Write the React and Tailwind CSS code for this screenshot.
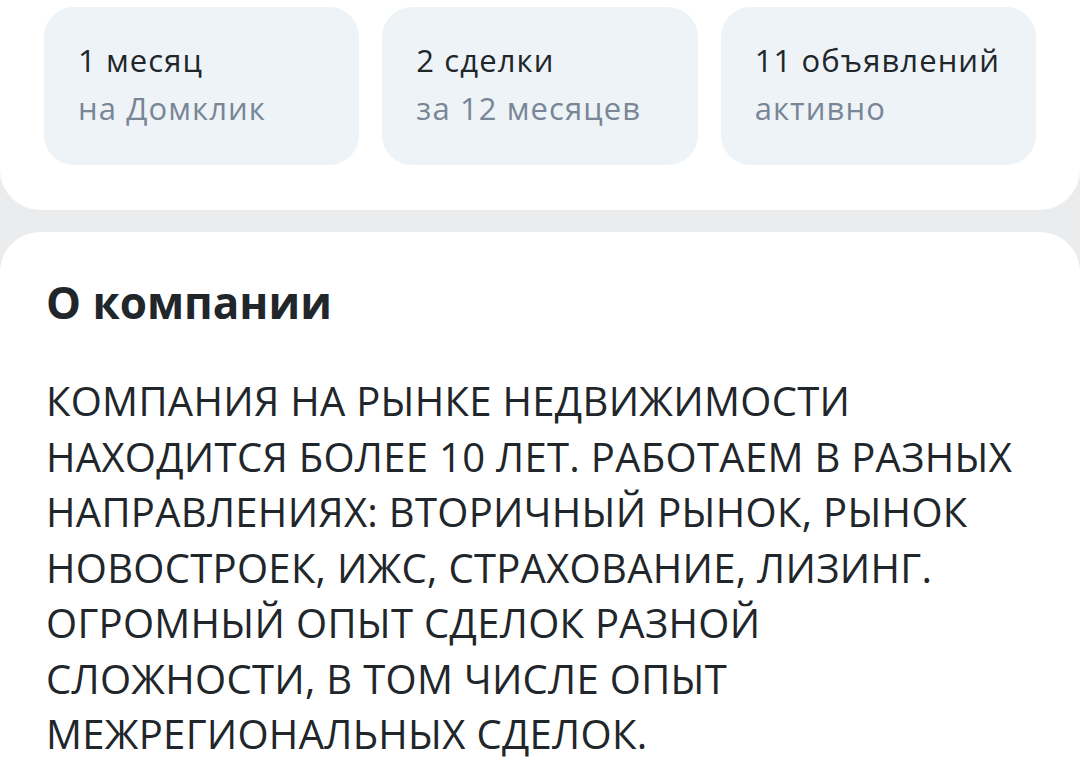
import React from 'react';

const stats = [
  { value: '1 месяц', label: 'на Домклик' },
  { value: '2 сделки', label: 'за 12 месяцев' },
  { value: '11 объявлений', label: 'активно' },
];

function StatCard({ value, label }) {
  return (
    <div className="bg-[#eef3f7] rounded-[30px] h-[158px] pl-[34px] pt-[29px] tracking-[1.1px]">
      <p className="text-[31px] leading-[48px] text-[#21262b]">{value}</p>
      <p className="text-[31px] leading-[48px] text-[#788696]">{label}</p>
    </div>
  );
}

export default function App() {
  return (
    <div
      className="h-[760px] bg-[#ebecee] overflow-hidden"
      style={{ fontFamily: '"Open Sans", "Noto Sans", sans-serif' }}
    >
      {/* Статистика */}
      <div className="bg-white rounded-b-[40px] px-[44px] pt-[7px] pb-[45px]">
        <div className="grid grid-cols-3 gap-[23px]">
          {stats.map((s) => (
            <StatCard key={s.value} {...s} />
          ))}
        </div>
      </div>

      {/* О компании */}
      <div className="mt-[22px] bg-white rounded-t-[40px] pl-[46px] pr-[60px] pt-[40px] pb-[40px] min-h-[528px]">
        <h2 className="text-[44px] leading-[60px] font-bold text-[#21262b]">О компании</h2>
        <p className="mt-[41px] text-[40px] leading-[55.5px] tracking-[0.3px] text-[#21262b]">
          КОМПАНИЯ НА РЫНКЕ НЕДВИЖИМОСТИ НАХОДИТСЯ БОЛЕЕ 10 ЛЕТ. РАБОТАЕМ В РАЗНЫХ НАПРАВЛЕНИЯХ: ВТОРИЧНЫЙ
          РЫНОК, РЫНОК НОВОСТРОЕК, ИЖС, СТРАХОВАНИЕ, ЛИЗИНГ. ОГРОМНЫЙ ОПЫТ СДЕЛОК РАЗНОЙ СЛОЖНОСТИ, В ТОМ ЧИСЛЕ
          ОПЫТ МЕЖРЕГИОНАЛЬНЫХ СДЕЛОК.
        </p>
      </div>
    </div>
  );
}
